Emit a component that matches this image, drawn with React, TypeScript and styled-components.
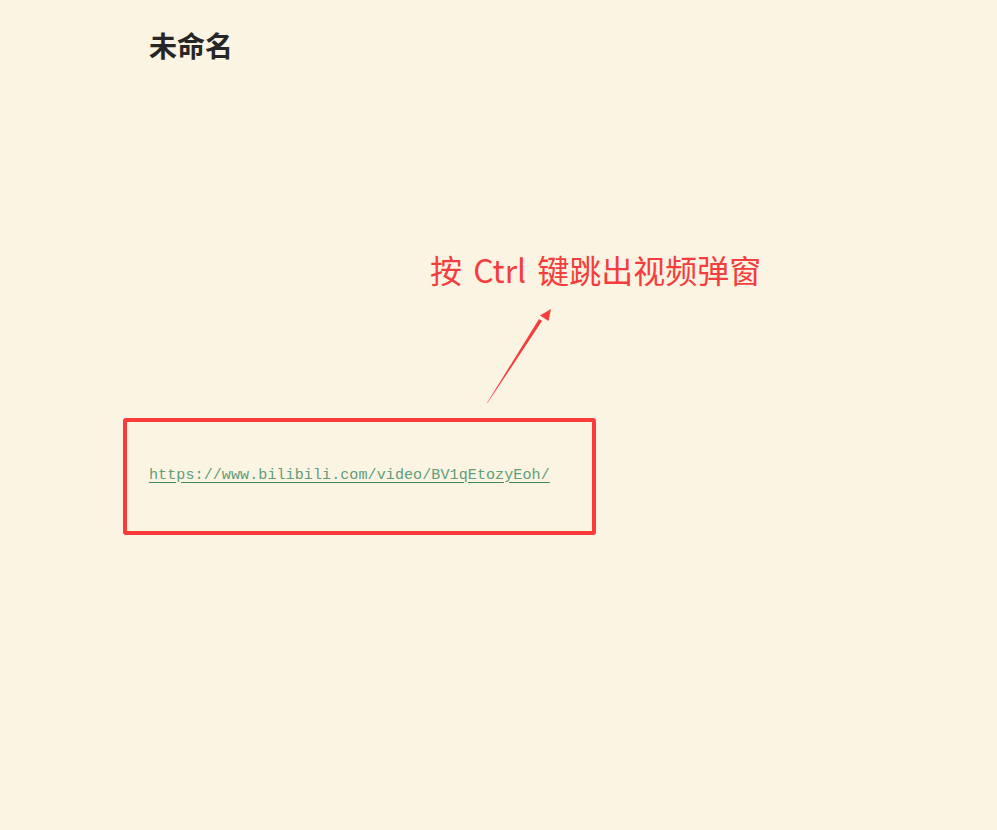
import React from "react";
import styled, { createGlobalStyle } from "styled-components";

const Global = createGlobalStyle`
  html, body { margin: 0; padding: 0; background: #fcf4e2; }
  body { font-family: "Noto Sans CJK SC", "Noto Sans", sans-serif; }
`;

const Page = styled.div`
  position: relative;
  width: 997px;
  height: 830px;
  background: #fcf4e2;
  overflow: hidden;
`;

const Column = styled.main`
  display: flex;
  flex-direction: column;
  padding: 23px 0 0 123px;
`;

const Title = styled.h1`
  margin: 0 0 0 26px;
  font-family: "Noto Sans CJK SC", sans-serif;
  font-size: 28px;
  font-weight: 700;
  line-height: 44px;
  color: #262626;
`;

const LinkBox = styled.div`
  margin-top: 351px;
  box-sizing: border-box;
  width: 473px;
  height: 117px;
  border: 4px solid #fb3b3b;
  border-radius: 3px;
  display: flex;
  align-items: center;
  padding-left: 22px;
`;

const Url = styled.a`
  font-family: "Liberation Mono", "DejaVu Sans Mono", monospace;
  font-size: 15.1px;
  letter-spacing: 0.05px;
  color: #5f9e7b;
  text-decoration: underline;
  text-decoration-color: #3e8a5c;
  text-underline-offset: 3px;
  margin-top: -4px;
`;

const Note = styled.div`
  position: absolute;
  left: 430px;
  top: 246px;
  font-family: "Noto Sans CJK SC", sans-serif;
  font-size: 32px;
  word-spacing: 4px;
  line-height: 46px;
  color: #f43d3d;
  white-space: pre;
`;

const Arrow = styled.svg`
  position: absolute;
  left: 480px;
  top: 300px;
`;

export default function App() {
  return (
    <>
      <Global />
      <Page>
        <Column>
          <Title>未命名</Title>
          <LinkBox>
            <Url href="https://www.bilibili.com/video/BV1qEtozyEoh/">
              https://www.bilibili.com/video/BV1qEtozyEoh/
            </Url>
          </LinkBox>
        </Column>
        <Note>按 Ctrl 键跳出视频弹窗</Note>
        <Arrow width="80" height="110" viewBox="0 0 80 110">
          <polygon points="7,103 59,19 62,21 7.5,103" fill="#f43d3d" />
          <polygon points="71,9 68.5,21 60,15.5" fill="#f43d3d" />
        </Arrow>
      </Page>
    </>
  );
}
